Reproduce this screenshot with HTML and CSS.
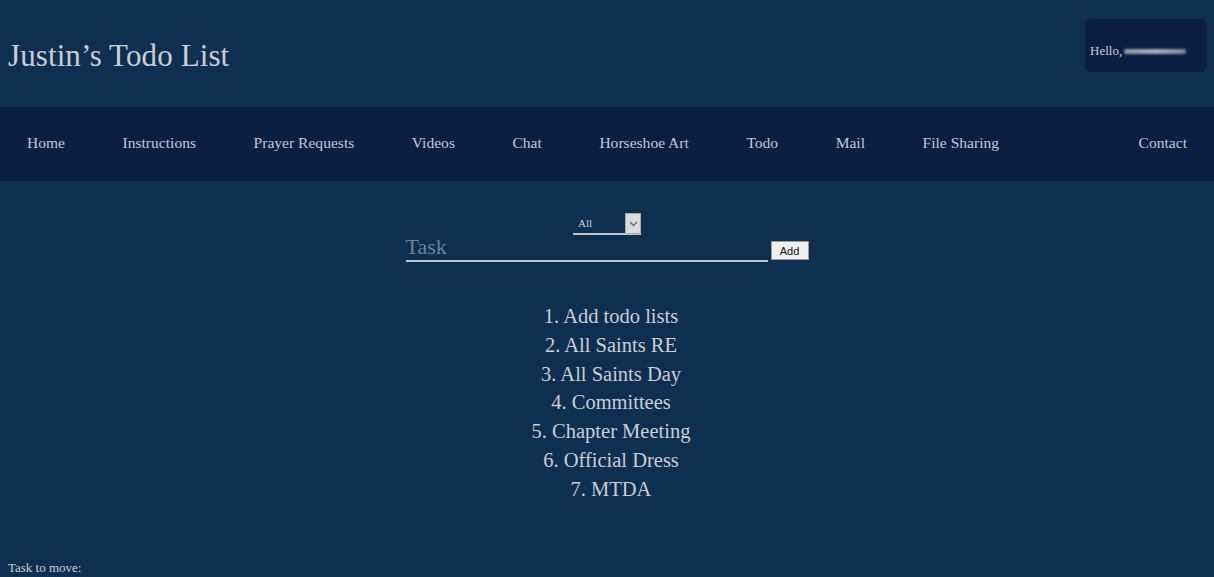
FILE: index.html
```html
<!DOCTYPE html>
<html>
<head>
<meta charset="utf-8">
<link rel="stylesheet" href="styles.css">
</head>
<body>
<header class="top">
  <h1 class="title">Justin’s Todo List</h1>
  <div class="hello">Hello, <span class="blur"></span></div>
</header>
<nav class="nav">
  <ul class="nav-left">
    <li>Home</li>
    <li>Instructions</li>
    <li>Prayer Requests</li>
    <li>Videos</li>
    <li>Chat</li>
    <li>Horseshoe Art</li>
    <li>Todo</li>
    <li>Mail</li>
    <li>File Sharing</li>
  </ul>
  <ul class="nav-right">
    <li>Contact</li>
  </ul>
</nav>
<main class="main">
  <div class="filter-row">
    <div class="select"><span class="select-label">All</span><span class="select-btn"><svg width="9" height="6" viewBox="0 0 9 6"><path d="M1 1 L4.5 4.5 L8 1" fill="none" stroke="#6b6b6b" stroke-width="1.3"/></svg></span></div>
  </div>
  <div class="add-row">
    <div class="task-input">Task</div>
    <button class="add-btn">Add</button>
  </div>
  <ol class="tasks">
    <li>1. Add todo lists</li>
    <li>2. All Saints RE</li>
    <li>3. All Saints Day</li>
    <li>4. Committees</li>
    <li>5. Chapter Meeting</li>
    <li>6. Official Dress</li>
    <li>7. MTDA</li>
  </ol>
</main>
<div class="move">Task to move:</div>
</body>
</html>
```

FILE: styles.css
```css
html, body {
  margin: 0;
  padding: 0;
  background: #0e2f50;
  color: #c9ced6;
  font-family: "Liberation Serif", "Times New Roman", serif;
  height: 577px;
  overflow: hidden;
}
.top {
  height: 107px;
  display: flex;
  justify-content: space-between;
  align-items: flex-start;
  padding: 0 7px 0 8px;
  box-sizing: border-box;
}
.title {
  margin: 39px 0 0 0;
  font-size: 31px;
  font-weight: normal;
  line-height: 34px;
  letter-spacing: 0.1px;
  color: #c9ced6;
}
.hello {
  margin-top: 19px;
  width: 122px;
  height: 53px;
  background: #0b1f43;
  border-radius: 6px;
  box-sizing: border-box;
  padding: 24px 0 0 5px;
  display: flex;
  align-items: flex-start;
  font-size: 13px;
  line-height: 16px;
  color: #c9ced6;
}
.blur {
  display: inline-block;
  width: 62px;
  height: 5px;
  margin-left: 2px;
  margin-top: 6px;
  background: linear-gradient(90deg, #8b95a3, #a9b0ba 50%, #7d8796);
  filter: blur(1.2px);
  border-radius: 2px;
}
.nav {
  height: 74px;
  background: #0b1f43;
  display: flex;
  justify-content: space-between;
  align-items: center;
  padding: 0 27px;
  font-size: 15.5px;
  letter-spacing: 0.03px;
}
.nav ul {
  list-style: none;
  margin: 0;
  padding: 0;
  display: flex;
  gap: 57.5px;
}
.nav li {
  color: #c3c9d3;
  line-height: 18px;
  padding-bottom: 2px;
}
.main {
  display: flex;
  flex-direction: column;
  align-items: center;
  padding-top: 32px;
}
.filter-row {
  display: flex;
  justify-content: center;
}
.select {
  width: 68px;
  height: 22px;
  display: flex;
  align-items: flex-start;
  border-bottom: 2px solid #c0c6cf;
  box-sizing: border-box;
}
.select-label {
  font-size: 11px;
  padding: 4px 0 0 5px;
  flex: 1;
  color: #d2d6dc;
}
.select-btn {
  width: 16px;
  height: 21px;
  background: #dcdcdc;
  border: 1px solid #a8a8a8;
  box-sizing: border-box;
  display: flex;
  align-items: center;
  justify-content: center;
}
.add-row {
  display: flex;
  align-items: flex-end;
}
.task-input {
  width: 362px;
  height: 27px;
  border-bottom: 2px solid #c0c6cf;
  box-sizing: border-box;
  font-size: 22px;
  line-height: 24px;
  color: #6d8299;
}
.add-btn {
  margin-left: 3px;
  margin-bottom: 2px;
  width: 38px;
  height: 19px;
  padding: 0;
  font-family: "Liberation Sans", Arial, sans-serif;
  font-size: 11px;
  background: #efefef;
  border: 1px solid #9a9a9a;
  border-radius: 0;
  color: #111;
}
.tasks {
  list-style: none;
  margin: 40px 0 0 8px;
  padding: 0;
  text-align: center;
  font-size: 20.5px;
  line-height: 28.8px;
  color: #c9ced6;
}
.move {
  position: absolute;
  left: 8px;
  top: 560px;
  font-size: 13px;
  color: #c9ced6;
}
```
